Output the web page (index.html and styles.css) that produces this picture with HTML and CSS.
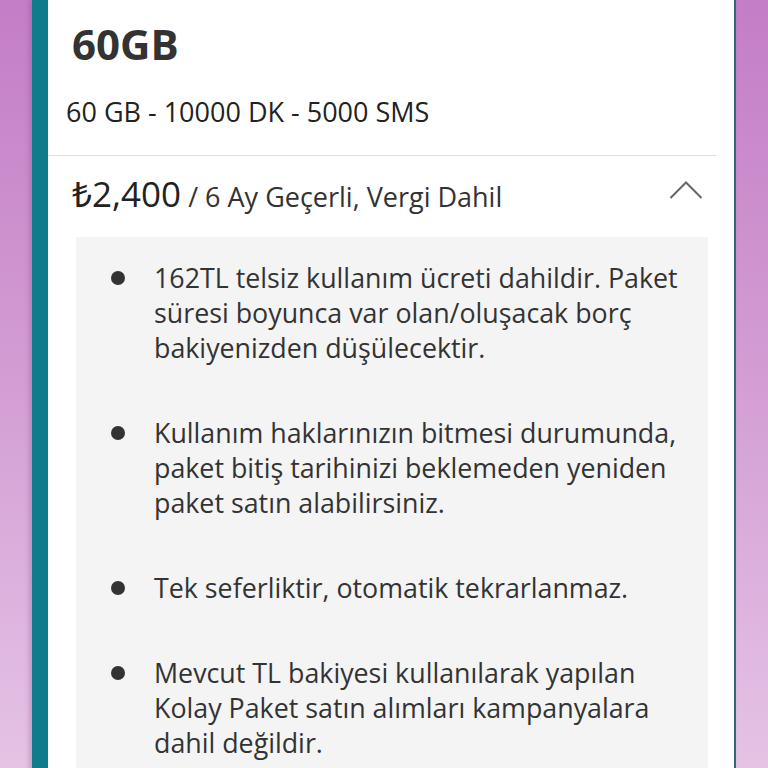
FILE: index.html
```html
<!DOCTYPE html>
<html lang="tr">
<head>
<meta charset="utf-8">
<title>60GB Paket</title>
<link rel="stylesheet" href="styles.css">
</head>
<body>
<div class="page">
  <div class="card">
    <div class="head">
      <h1 class="title">60GB</h1>
      <p class="subtitle">60 GB - 10000 DK - 5000 SMS</p>
    </div>
    <div class="divider"></div>
    <div class="price-row">
      <div class="price"><span class="amount">₺2,400</span><span class="period"> / 6 Ay Geçerli, Vergi Dahil</span></div>
      <svg class="chevron" width="34" height="20" viewBox="0 0 34 20"><path d="M1.5 18 L17 2.5 L32.5 18" fill="none" stroke="#666" stroke-width="2"/></svg>
    </div>
    <div class="details">
      <ul class="list">
        <li>162TL telsiz kullanım ücreti dahildir. Paket süresi boyunca var olan/oluşacak borç bakiyenizden düşülecektir.</li>
        <li>Kullanım haklarınızın bitmesi durumunda, paket bitiş tarihinizi beklemeden yeniden paket satın alabilirsiniz.</li>
        <li>Tek seferliktir, otomatik tekrarlanmaz.</li>
        <li>Mevcut TL bakiyesi kullanılarak yapılan Kolay Paket satın alımları kampanyalara dahil değildir.</li>
      </ul>
    </div>
  </div>
</div>
</body>
</html>
```
FILE: styles.css
```css
* { box-sizing: border-box; }
html, body { margin: 0; padding: 0; }
body {
  background: linear-gradient(180deg, #c47dc6 0%, #d39ed4 50%, #e5c3e5 100%);
  font-family: "Open Sans", "Noto Sans", sans-serif;
  color: #333;
  height: 768px;
  overflow: hidden;
}
.page {
  padding: 0 32px;
}
.card {
  background: #fff;
  border-left: 16px solid #0f7b8b;
  border-right: 2px solid #2f6878;
  min-height: 768px;
  box-shadow: -3px 0 4px rgba(120, 60, 120, 0.25);
}
.head {
  padding: 18px 0 0 18px;
}
.title {
  margin: 0;
  padding-left: 6px;
  font-size: 42px;
  line-height: 52px;
  font-weight: 700;
  color: #333;
}
.subtitle {
  margin: 26px 0 0;
  font-size: 27px;
  line-height: 31px;
  color: #222;
}
.divider {
  margin: 28px 18px 0 0;
  height: 1px;
  background: #dddddd;
}
.price-row {
  display: flex;
  align-items: center;
  justify-content: space-between;
  padding: 19px 31px 0 24px;
}
.price {
  display: flex;
  align-items: baseline;
  line-height: 38px;
}
.amount {
  font-size: 35px;
  color: #222;
}
.period {
  font-size: 27px;
  color: #333;
  white-space: pre;
}
.chevron {
  display: block;
  margin-top: -12px;
}
.details {
  margin: 21px 26px 0 28px;
  background: #f4f4f4;
  padding: 23px 20px 40px 0;
  min-height: 600px;
}
.list {
  list-style: none;
  margin: 0;
  padding: 0 0 0 78px;
}
.list li {
  position: relative;
  font-size: 26.8px;
  line-height: 35px;
  color: #333;
  margin-bottom: 50px;
}
.list li::before {
  content: "";
  position: absolute;
  left: -43px;
  top: 11px;
  width: 14px;
  height: 14px;
  border-radius: 50%;
  background: #333;
}
```
